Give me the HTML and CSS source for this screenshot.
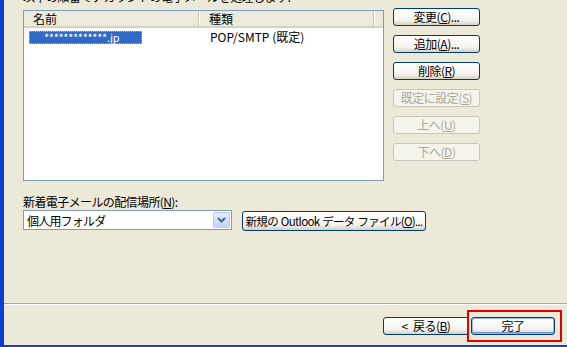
FILE: index.html
```
<!DOCTYPE html>
<html>
<head>
<meta charset="utf-8">
<link rel="stylesheet" href="styles.css">
</head>
<body>
<div class="window">
  <div class="content">
    <p class="intro">以下の順番でアカウントの電子メールを処理します:</p>

    <div class="accounts">
      <div class="listview">
        <div class="list-head">
          <div class="col col-name">名前</div>
          <div class="col col-type">種類</div>
          <div class="col col-rest"></div>
        </div>
        <div class="list-row">
          <div class="cell cell-name"><span class="selected">*************.jp</span></div>
          <div class="cell cell-type">POP/SMTP (既定)</div>
        </div>
      </div>

      <div class="side-buttons">
        <button class="xpbtn">変更(<u>C</u>)...</button>
        <button class="xpbtn">追加(<u>A</u>)...</button>
        <button class="xpbtn">削除(<u>R</u>)</button>
        <button class="xpbtn" disabled>既定に設定(<u>S</u>)</button>
        <button class="xpbtn" disabled>上へ(<u>U</u>)</button>
        <button class="xpbtn" disabled>下へ(<u>D</u>)</button>
      </div>
    </div>

    <label class="field-label">新着電子メールの配信場所(<u>N</u>):</label>
    <div class="delivery">
      <div class="combo">
        <span class="combo-text">個人用フォルダ</span>
        <span class="combo-arrow">
          <svg width="9" height="6" viewBox="0 0 9 6"><path d="M1 1 L4.5 4.5 L8 1" fill="none" stroke="#4d6185" stroke-width="2"/></svg>
        </span>
      </div>
      <button class="xpbtn wide">新規の Outlook データ ファイル(<u>O</u>)...</button>
    </div>
  </div>

  <div class="separator"></div>

  <div class="footer">
    <button class="xpbtn nav back">&lt; 戻る(<u>B</u>)</button>
    <span class="highlight"><button class="xpbtn nav finish">完了</button></span>
  </div>
</div>
</body>
</html>
```
FILE: styles.css
```
html, body {
    margin: 0;
    padding: 0;
    overflow: hidden;
}

body {
    font-family: "Noto Sans CJK JP", "Liberation Sans", sans-serif;
    font-size: 12px;
    color: #000;
    background: #ece9d8;
}

/* window frame */
.window {
    height: 347px;
    box-sizing: border-box;
    border-left: 4px solid #0a3fd4;
    border-bottom: 2px solid #0a3fd4;
    background: #ece9d8;
    display: flex;
    flex-direction: column;
}

.content {
    height: 303px;
    padding-left: 19px;
    box-sizing: border-box;
}

.intro {
    margin: -10px 0 0 0;
    line-height: 13px;
    height: 14px;
    letter-spacing: -0.5px;
}

/* accounts list + buttons */
.accounts {
    display: flex;
    margin-top: 4px;
}

.listview {
    width: 361px;
    height: 171px;
    margin-top: 2px;
    box-sizing: border-box;
    border: 1px solid #7f9db9;
    background: #fff;
}

.list-head {
    display: flex;
    height: 15px;
    background: #ebeadb;
    border-bottom: 2px solid #d6d2c2;
    line-height: 15px;
}

.col {
    box-sizing: border-box;
    padding-left: 9px;
    border-right: 1px solid #c7c5b2;
    box-shadow: 1px 0 0 #fff;
}

.col-name { width: 178px; }
.col-type { width: 178px; padding-left: 10px; }
.col-rest { flex: 1; border-right: none; box-shadow: none; }

.list-row {
    display: flex;
    margin-top: 2px;
    line-height: 13px;
}

.cell-name {
    width: 180px;
    padding-left: 5px;
}

.cell-type {
    padding-left: 1px;
}

.selected {
    display: inline-block;
    width: 113px;
    height: 13px;
    box-sizing: border-box;
    padding-left: 15px;
    background: #316ac5;
    color: #fff;
    outline: 1px dotted #a0b8e8;
    outline-offset: -1px;
    letter-spacing: -0.3px;
    font-size: 11px;
}

.side-buttons {
    display: flex;
    flex-direction: column;
    gap: 9px;
    margin-left: 9px;
}

/* XP style button */
.xpbtn {
    font-family: inherit;
    font-size: 12px;
    color: #000;
    width: 87px;
    height: 18px;
    padding: 0;
    line-height: 14px;
    white-space: nowrap;
    border: 1px solid #003c74;
    border-radius: 3px;
    background: linear-gradient(#ffffff, #f4f3ee 70%, #d6d0c5);
    letter-spacing: -0.5px;
}

.xpbtn u {
    text-underline-offset: 1px;
}

.xpbtn:disabled {
    color: #aca899;
    border-color: #c9c7ba;
    background: #f5f4ea;
}

/* delivery location */
.field-label {
    display: block;
    margin-top: 14px;
    line-height: 14px;
    letter-spacing: -0.6px;
}

.delivery {
    display: flex;
    align-items: center;
    gap: 10px;
}

.combo {
    width: 209px;
    height: 20px;
    box-sizing: border-box;
    border: 1px solid #7f9db9;
    background: #fff;
    display: flex;
    align-items: center;
    justify-content: space-between;
    padding: 0 1px 0 3px;
}

.combo-text {
    letter-spacing: -0.8px;
}

.combo-arrow {
    width: 17px;
    height: 16px;
    box-sizing: border-box;
    border: 1px solid #b9c9ef;
    border-radius: 2px;
    background: linear-gradient(#e6eefc, #c1d3fb);
    display: flex;
    align-items: center;
    justify-content: center;
}

.xpbtn.wide {
    width: 184px;
    height: 20px;
    margin-top: 2px;
    font-size: 11.5px;
    letter-spacing: -0.7px;
    word-spacing: 1px;
}

/* wizard footer */
.separator {
    height: 1px;
    background: #aca899;
    border-bottom: 1px solid #fff;
}

.footer {
    display: flex;
    justify-content: flex-end;
    align-items: flex-start;
    padding: 5px 5px 0 0;
}

.xpbtn.nav {
    height: 18px;
    margin-top: 7px;
}

.back {
    width: 86px;
    margin-right: -2px;
    word-spacing: 3px;
}

.highlight {
    border: 2px solid #e00000;
    padding: 5px 5px 5px 2px;
    display: flex;
}

.xpbtn.finish {
    width: 84px;
    margin-top: 0;
    border-color: #003c74;
    box-shadow: inset 0 0 0 1px #98b8ea, inset 0 -1px 0 1px #6f93d8;
}
```
